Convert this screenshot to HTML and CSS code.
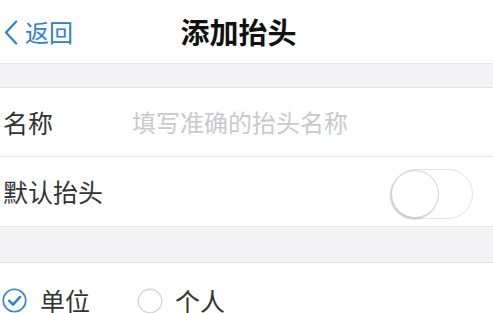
FILE: index.html
```html
<!DOCTYPE html>
<html lang="zh">
<head>
<meta charset="utf-8">
<link rel="stylesheet" href="styles.css">
</head>
<body>
<div class="page">
  <header class="nav">
    <a class="back">
      <svg class="chev" width="14" height="25" viewBox="0 0 14 25"><path d="M12.2 1.5 L2 12.5 L12.2 23.5" fill="none" stroke="#2f80d6" stroke-width="2.2" stroke-linecap="round" stroke-linejoin="round"/></svg>
      <span>返回</span>
    </a>
    <h1 class="title">添加抬头</h1>
    <span></span>
  </header>
  <div class="band band-top"></div>
  <section class="group">
    <div class="row row-first">
      <span class="label label-name">名称</span>
      <span class="placeholder">填写准确的抬头名称</span>
    </div>
    <div class="row">
      <span class="label">默认抬头</span>
      <span class="switch"><span class="knob"></span></span>
    </div>
  </section>
  <div class="band band-mid"></div>
  <section class="radios">
    <span class="radio">
      <svg width="25" height="25" viewBox="0 0 24 24"><circle cx="12" cy="12" r="10.8" fill="none" stroke="#3a87d8" stroke-width="1.6"/><path d="M6.8 12.2 L10.6 16 L17.4 8.6" fill="none" stroke="#2f80d6" stroke-width="2.4" stroke-linecap="round" stroke-linejoin="round"/></svg>
      <span>单位</span>
    </span>
    <span class="radio">
      <svg width="26" height="26" viewBox="0 0 26 26"><circle cx="13" cy="13" r="11.8" fill="none" stroke="#d6d6d9" stroke-width="1.4"/></svg>
      <span>个人</span>
    </span>
  </section>
</div>
</body>
</html>
```

FILE: styles.css
```css
html, body {
  margin: 0;
  padding: 0;
  background: #ffffff;
}
body {
  font-family: "Noto Sans CJK SC", "Noto Sans", sans-serif;
  color: #333333;
  width: 493px;
  height: 313px;
  overflow: hidden;
}
.nav {
  height: 63px;
  display: grid;
  grid-template-columns: 1fr auto 1fr;
  align-items: center;
  padding: 0 20px 0 4px;
}
.back {
  display: flex;
  align-items: center;
  gap: 7px;
  color: #2f80d6;
  font-size: 24px;
  line-height: 1;
}
.chev {
  margin-top: 1px;
}
.title {
  margin: 0;
  font-size: 29px;
  font-weight: 700;
  color: #111111;
  line-height: 1;
  letter-spacing: 0;
}
.band {
  background: #f3f3f6;
  border-top: 1px solid #e4e4e7;
  border-bottom: 1px solid #e4e4e7;
  box-sizing: border-box;
}
.band-top {
  height: 25px;
}
.band-mid {
  height: 37px;
}
.group {
  display: flex;
  flex-direction: column;
}
.row {
  height: 69px;
  display: flex;
  align-items: center;
  justify-content: space-between;
  padding: 0 20px 0 3px;
  box-sizing: border-box;
}
.row-first {
  justify-content: flex-start;
  border-bottom: 1px solid #e6e6e8;
}
.label {
  font-size: 25px;
  color: #333333;
  line-height: 1;
}
.label-name {
  width: 129px;
}
.placeholder {
  font-size: 24px;
  color: #c9c9cd;
  line-height: 1;
}
.switch {
  width: 82px;
  height: 50px;
  box-sizing: border-box;
  border: 1.5px solid #e3e3e5;
  border-radius: 25px;
  background: #ffffff;
  display: flex;
  align-items: center;
  margin-top: 4px;
}
.knob {
  width: 48px;
  height: 48px;
  box-sizing: border-box;
  border-radius: 50%;
  background: #ffffff;
  border: 1px solid #d2d2d4;
  box-shadow: -1px 1.5px 1.5px rgba(0, 0, 0, 0.18);
  margin-left: -1px;
}
.radios {
  height: 50px;
  box-sizing: border-box;
  padding: 25px 0 0 2px;
  display: flex;
  align-items: center;
  gap: 47px;
}
.radio {
  display: flex;
  align-items: center;
  gap: 13px;
  font-size: 25px;
  color: #333333;
  line-height: 1;
}
.radio:last-child {
  gap: 12px;
}
```
